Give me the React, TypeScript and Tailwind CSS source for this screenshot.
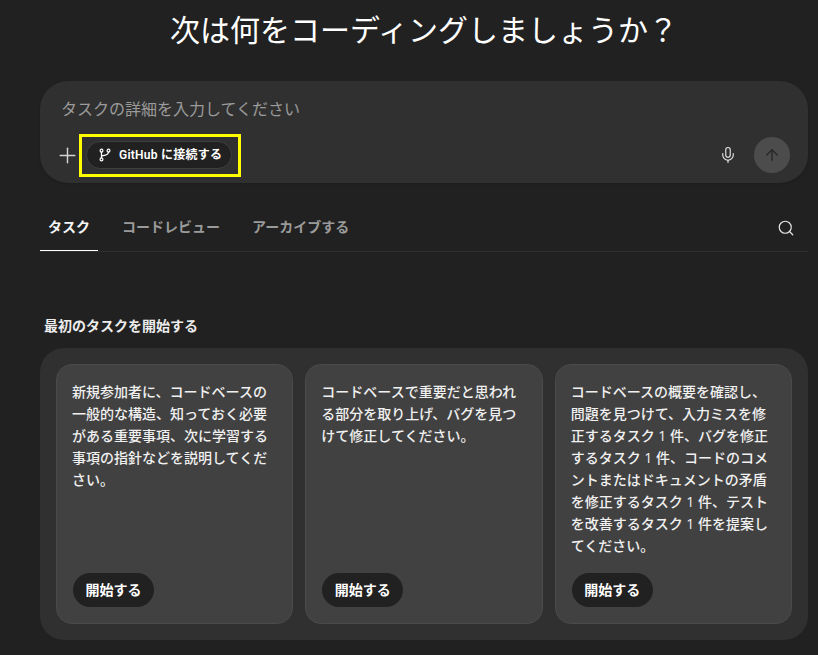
import { ArrowUp, Mic, Plus, Search } from "lucide-react";

const FONT = "font-['Open_Sans','Noto_Sans_CJK_JP','Noto_Sans',sans-serif]";

const cards = [
  "新規参加者に、コードベースの一般的な構造、知っておく必要がある重要事項、次に学習する事項の指針などを説明してください。",
  "コードベースで重要だと思われる部分を取り上げ、バグを見つけて修正してください。",
  "コードベースの概要を確認し、問題を見つけて、入力ミスを修正するタスク 1 件、バグを修正するタスク 1 件、コードのコメントまたはドキュメントの矛盾を修正するタスク 1 件、テストを改善するタスク 1 件を提案してください。",
];

function BranchIcon() {
  return (
    <svg viewBox="0 0 16 16" className="size-[14px]" fill="none" stroke="currentColor" strokeWidth="1.4" strokeLinecap="round">
      <circle cx="4" cy="3" r="1.6" />
      <circle cx="4" cy="13" r="1.6" />
      <circle cx="12" cy="3" r="1.6" />
      <path d="M4 4.8v6.4" />
      <path d="M12 4.8c0 3-3 3.6-8 4.2" />
    </svg>
  );
}

export default function App() {
  return (
    <div className={`${FONT} h-[655px] w-[818px] overflow-hidden bg-[#212121] pl-10 pr-2.5 text-white`}>
      <h1 className="h-[81px] pt-2 text-center text-[30px] leading-[44px] font-normal">次は何をコーディングしましょうか？</h1>

      <div className="relative flex h-[102px] flex-col rounded-[28px] bg-[#303030] px-[14px] shadow-[0_1px_3px_rgba(0,0,0,0.15)]">
        <div className="h-[56px] pl-[7px] pt-4 text-base leading-6 text-[#9b9b9b]">タスクの詳細を入力してください</div>
        <div className="flex items-center">
          <Plus className="ml-px size-[25px] text-[#d4d4d4]" strokeWidth={1.4} />
          <div className="ml-[6px] flex h-[28px] w-[146px] items-center rounded-full border border-[#3f3f3f] bg-[#212121] pl-[11px] font-['Roboto','Noto_Sans_CJK_JP',sans-serif] text-xs font-semibold">
            <BranchIcon />
            <span className="ml-[7px] tracking-[0.25px]">GitHub に接続する</span>
          </div>
          <Mic className="ml-auto size-[18px] text-[#e5e5e5]" strokeWidth={1.5} />
          <div className="ml-[17px] mr-[4px] flex size-9 items-center justify-center rounded-full bg-[#4c4c4c]">
            <ArrowUp className="size-[18px] text-[#2a2a2a]" strokeWidth={2} />
          </div>
        </div>
        <div className="absolute left-[39px] top-[53px] h-[43px] w-[162px] border-[3px] border-[#ffff00]" />
      </div>

      <div className="mt-[24px] flex h-[45px] items-start border-b border-[#303030] text-sm font-semibold leading-[40px]">
        <div className="h-[44px] w-[58px] border-b-[1px] border-white text-center text-[#f5f5f5]">タスク</div>
        <div className="ml-6 text-[#9a9a9a]">コードレビュー</div>
        <div className="ml-8 text-[#9a9a9a]">アーカイブする</div>
        <Search className="ml-auto mr-[13px] mt-[12px] size-[18px] text-[#e5e5e5]" strokeWidth={1.6} />
      </div>

      <h2 className="mt-[64px] pl-1 text-sm leading-5 font-semibold text-[#ececec]">最初のタスクを開始する</h2>

      <div className="mt-[12px] grid h-[292px] grid-cols-3 gap-3 rounded-[24px] bg-[#303030] p-4">
        {cards.map((c) => (
          <div key={c} className="flex flex-col justify-between rounded-2xl border border-[#4a4a4a] bg-[#414141] p-4">
            <p className="-ml-px pr-[3px] text-sm leading-[22px] font-medium text-[#f0f0f0]">{c}</p>
            <div className="flex h-[34px] w-[81px] items-center justify-center rounded-full bg-[#212121] text-sm font-semibold">開始する</div>
          </div>
        ))}
      </div>
    </div>
  );
}
